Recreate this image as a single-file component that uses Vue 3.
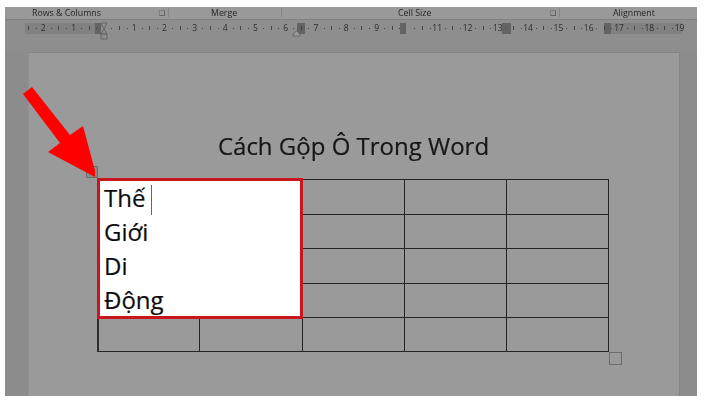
<script setup>
const OFFSET = 5
const first = 13
const step = 30.3
const names = { 1: '2', 2: '1', 4: '1', 5: '2', 6: '3', 7: '4', 8: '5', 9: '6', 10: '7', 11: '8', 12: '9', 14: '11', 15: '12', 16: '13', 17: '14', 18: '15', 19: '16', 20: '17', 21: '18', 22: '19' }
const marks = Object.keys(names).map((k) => ({ x: first + k * step - OFFSET, label: names[k] }))
const dots = []
for (let i = 2; i < 89; i++) {
  if (i % 4 !== 0) dots.push({ x: first + (i * step) / 4 - OFFSET, tall: i % 4 === 2 })
}
const blocks = [[90, 6], [292, 8], [395, 6], [497, 9], [599, 7]]
const shades = [[20, 70], [600, 77]]
const cells = Array.from({ length: 12 }, (_, i) => i)
const bottomCells = Array.from({ length: 5 }, (_, i) => i)
</script>

<template>
  <div class="shot">
    <div class="frame">
      <div class="ribbon">
        <span class="group g1">Rows &amp; Columns</span>
        <span class="launcher l1"></span>
        <span class="sep s1"></span>
        <span class="group g2">Merge</span>
        <span class="sep s2"></span>
        <span class="group g3">Cell Size</span>
        <span class="launcher l2"></span>
        <span class="sep s3"></span>
        <span class="group g4">Alignment</span>
      </div>
      <div class="ruler">
        <i v-for="s in shades" :key="'s' + s[0]" class="shade" :style="{ left: s[0] + 'px', width: s[1] + 'px' }"></i>
        <i v-for="b in blocks" :key="'b' + b[0]" class="block" :style="{ left: b[0] + 'px', width: b[1] + 'px' }"></i>
        <i v-for="d in dots" :key="d.x" class="dot" :class="{ tall: d.tall }" :style="{ left: d.x + 'px' }"></i>
        <span v-for="m in marks" :key="m.x" class="num" :style="{ left: m.x + 'px' }">{{ m.label }}</span>
        <svg class="marker" width="9" height="18" viewBox="0 0 9 18">
          <path d="M1 1h6L4 7zM1 12L4 7l3 5zM1 12h6v5H1z" fill="#8f8f8f" stroke="#666" stroke-width="1" />
        </svg>
        <svg class="marker m2" width="10" height="7" viewBox="0 0 10 7">
          <path d="M1 6V4l3.500-3L8 4v2z" fill="#9a9a9a" stroke="#666" stroke-width="1" />
        </svg>
      </div>
      <div class="desk">
        <div class="page">
          <h1 class="title">Cách Gộp Ô Trong Word</h1>
          <div class="table">
            <span class="handle"></span>
            <div class="merged">
              <p>Thế<span class="caret"></span></p>
              <p>Giới</p>
              <p>Di</p>
              <p>Động</p>
            </div>
            <div v-for="c in cells" :key="c" class="cell"></div>
            <div v-for="c in bottomCells" :key="'b' + c" class="cell last"></div>
            <span class="resize"></span>
          </div>
        </div>
      </div>
    </div>
    <svg class="arrow" width="90" height="104" viewBox="0 0 90 104">
      <path d="M18 18L27 11 65 59 78 50 92 102 43 76 55 67z" fill="#fe0000" />
    </svg>
  </div>
</template>

<style scoped>
.shot {
  position: relative;
  width: 708px;
  height: 402px;
  padding: 7px 11px 6px 5px;
  box-sizing: border-box;
  background: #fff;
  overflow: hidden;
  font-family: "Open Sans", "Noto Sans", sans-serif;
}
.frame {
  display: flex;
  flex-direction: column;
  height: 100%;
  background: #8c8c8c;
}
.ribbon {
  position: relative;
  height: 12px;
  background: #999;
  font-size: 8.800px;
  line-height: 12px;
  color: #262626;
  filter: blur(0.4px);
}
.group { position: absolute; top: 0; white-space: nowrap; }
.g1 { left: 27px; }
.g2 { left: 206px; }
.g3 { left: 393px; }
.g4 { left: 608px; }
.launcher { position: absolute; top: 3px; width: 6px; height: 6px; border: 1px solid #666; border-top-color: #7d7d7d; border-left-color: #7d7d7d; box-sizing: border-box; }
.l1 { left: 154px; }
.l2 { left: 545px; }
.sep { position: absolute; top: 1px; width: 1px; height: 9px; background: #858585; }
.s1 { left: 163px; }
.s2 { left: 276px; }
.s3 { left: 554px; }
.ruler {
  position: relative;
  height: 33px;
  background: #8e8e8e;
  border-top: 1px solid #808080;
  color: #2c2c2c;
  box-sizing: border-box;
  filter: blur(0.5px);
}
.shade { position: absolute; top: 3px; height: 11px; background: #7c7c7c; opacity: 0.7; }
.block { position: absolute; top: 3px; height: 11px; background: #636363; }
.dot { position: absolute; top: 8px; width: 1px; height: 1px; background: #444; }
.dot.tall { top: 6px; height: 4px; }
.num {
  position: absolute;
  top: 2px;
  width: 14px;
  margin-left: -7px;
  text-align: center;
  font-size: 8.500px;
  line-height: 12px;
}
.marker { position: absolute; left: 95px; top: 2px; }
.m2 { left: 287px; top: 10px; }
.desk {
  flex: 1;
  min-height: 0;
  padding: 0 17px 0 23px;
}
.page {
  height: 100%;
  background: #9a9a9a;
  box-sizing: border-box;
  border-top: 1px solid #848484;
  border-left: 1px solid #929292;
  border-right: 1px solid #848484;
  padding: 77px 70px 0 69px;
}
.title {
  margin: 0 0 17px;
  text-align: center;
  font-size: 24px;
  line-height: 32px;
  font-weight: 400;
  color: #161616;
  -webkit-text-stroke: 0.2px #161616;
  filter: blur(0.3px);
}
.table {
  position: relative;
  display: grid;
  grid-template-columns: 101px 103px 102px 102px 102px;
  grid-template-rows: repeat(4, 34.500px) 34.500px;
  width: 512px;
  margin-left: -1px;
  box-sizing: border-box;
  border-left: 2px solid #2e2e2e;
}
.cell {
  border-top: 1.600px solid #242424;
  border-right: 1.600px solid #242424;
}
.cell.last { border-bottom: 1.600px solid #242424; }
.merged {
  grid-column: 1 / span 2;
  grid-row: 1 / span 4;
  z-index: 1;
  margin: -1px 0 -2px -2px;
  background: #fff;
  border: 3px solid #c8161c;
  padding: 0 0 0 4px;
  color: #0d0d0d;
  font-size: 24px;
  line-height: 34px;
  -webkit-text-stroke: 0.2px #0d0d0d;
}
.merged p { margin: 0; height: 34px; }
.caret {
  display: inline-block;
  width: 1px;
  height: 30px;
  margin-left: 6px;
  vertical-align: -8px;
  background: #666;
}
.handle {
  position: absolute;
  left: -13px;
  top: -13px;
  width: 12px;
  height: 12px;
  border: 1px solid #6c6c6c;
  background: #8a8a8a;
  box-sizing: border-box;
}
.resize {
  position: absolute;
  right: -13px;
  bottom: -13px;
  width: 13px;
  height: 13px;
  border: 1px solid #6c6c6c;
  box-sizing: border-box;
}
.arrow { position: absolute; left: 5px; top: 76px; }
</style>
